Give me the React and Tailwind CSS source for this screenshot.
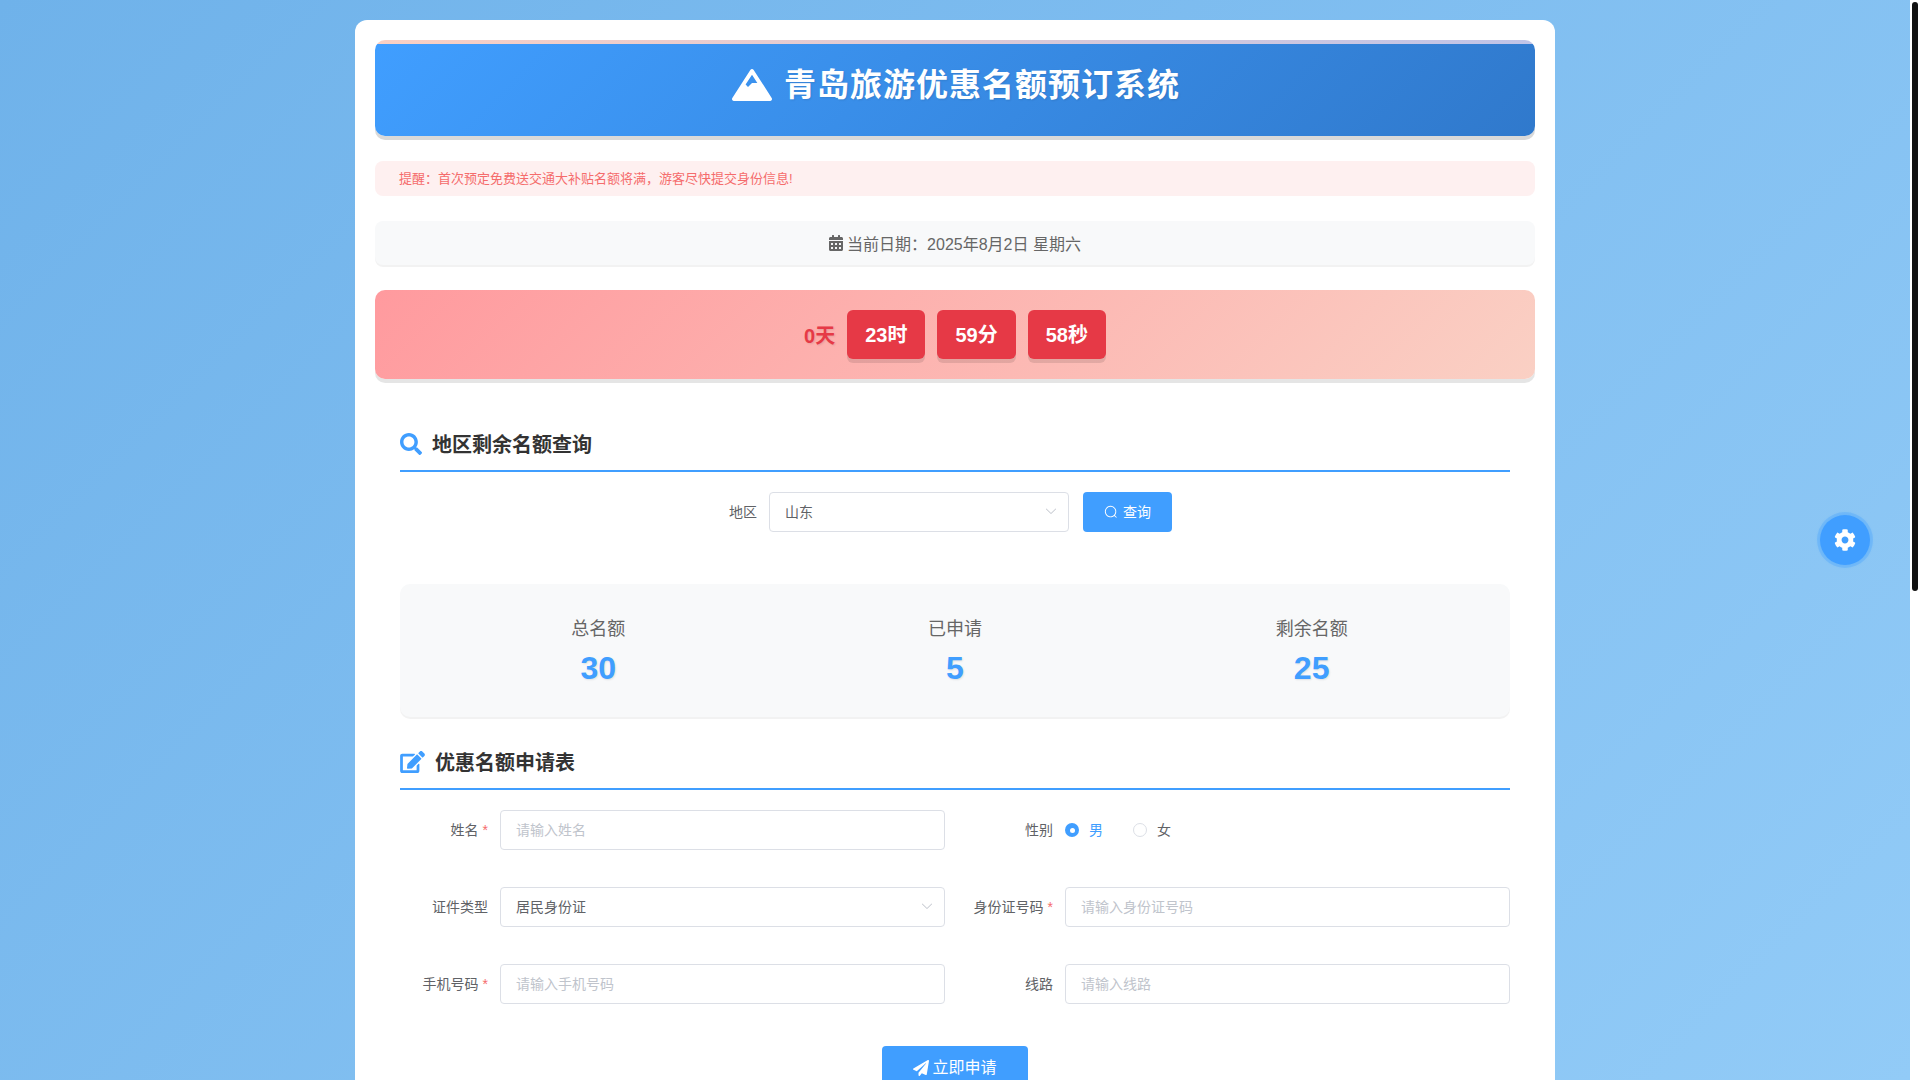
import React from "react";
import { FaMountain, FaCalendarAlt, FaSearch, FaEdit, FaPaperPlane, FaCog } from "react-icons/fa";

const ElSearch = ({ className }) => (
  <svg viewBox="0 0 1024 1024" className={className} fill="currentColor">
    <path d="m795.904 750.72 124.992 124.928a32 32 0 0 1-45.248 45.248L750.656 795.904a416 416 0 1 1 45.248-45.248zM480 832a352 352 0 1 0 0-704 352 352 0 0 0 0 704z" />
  </svg>
);

const ElArrow = ({ className }) => (
  <svg viewBox="0 0 1024 1024" className={className} fill="currentColor">
    <path d="M831.872 340.864 512 652.672 192.128 340.864a30.592 30.592 0 0 0-42.752 0 29.12 29.12 0 0 0 0 41.6L489.664 714.24a32 32 0 0 0 44.672 0l340.288-331.712a29.12 29.12 0 0 0 0-41.728 30.592 30.592 0 0 0-42.752 0z" />
  </svg>
);

const Heading = ({ icon, children, className }) => (
  <h2 className={`flex items-center gap-[10px] border-b-2 border-[#409eff] pb-[12px] text-[20px] font-bold leading-[30px] text-[#333333] ${className}`}>
    {icon}
    <span className="h-[30px] leading-[34px]">{children}</span>
  </h2>
);

const SelectBox = ({ value, className }) => (
  <div className={`flex h-[40px] items-center justify-between rounded-[4px] border border-[#dcdfe6] bg-white pl-[15px] pr-[10px] text-[14px] text-[#606266] ${className}`}>
    <span>{value}</span>
    <ElArrow className="mb-[3px] h-[14px] w-[14px] text-[#c0c4cc]" />
  </div>
);

const Field = ({ label, required, children }) => (
  <div className="flex h-[40px] items-center">
    <label className="flex w-[100px] shrink-0 items-center justify-end pr-[12px] text-[14px] text-[#606266]">
      {label}
      {required && <span className="ml-[4px] text-[#f56c6c]">*</span>}
    </label>
    {children}
  </div>
);

const TextInput = ({ placeholder }) => (
  <input
    placeholder={placeholder}
    className="h-[40px] min-w-0 flex-1 rounded-[4px] border border-[#dcdfe6] bg-white px-[15px] text-[14px] text-[#606266] outline-none placeholder:text-[#c0c4cc]"
  />
);

const TimeBox = ({ children }) => (
  <div className="rounded-[6px] bg-[#e63946] px-[18px] pb-[7px] pt-[9px] text-[20px] font-bold leading-[33px] text-white shadow-[0_4px_0_rgba(0,0,0,0.1)]">
    {children}
  </div>
);

const Stat = ({ label, value }) => (
  <div className="flex flex-col items-center">
    <div className="h-[27px] text-[18px] leading-[30px] text-[#666666]">{label}</div>
    <div className="mt-[3px] text-[32px] font-bold leading-[48px] text-[#409eff] [text-shadow:1px_1px_2px_rgba(0,0,0,0.1)]">{value}</div>
  </div>
);

export default function App() {
  return (
    <div className="flex h-screen overflow-hidden font-['Liberation_Sans','Noto_Sans_CJK_SC',sans-serif]">
      <div className="min-w-0 flex-1 overflow-hidden bg-[linear-gradient(135deg,#6fb2ea,#92cbf7)] py-[20px]">
        <main className="mx-auto min-h-[1927px] w-[1200px] rounded-[12px] bg-white p-[20px]">
          <header className="overflow-hidden rounded-[10px] shadow-[0_4px_0_rgba(0,0,0,0.15)]">
            <div className="h-[4px] bg-[linear-gradient(90deg,#fad0c4,#c0c4e8)]" />
            <div className="flex h-[92px] items-start justify-center gap-[12px] bg-[linear-gradient(135deg,#409eff,#3079cc)] pl-[2px] pt-[17px] text-white">
              <FaMountain className="mt-[8px] h-[32px] w-[40px]" />
              <h1 className="text-[32px] font-bold leading-[48px] tracking-[1px] [text-shadow:1px_1px_2px_rgba(0,0,0,0.1)]">青岛旅游优惠名额预订系统</h1>
            </div>
          </header>

          <div className="mt-[25px] flex h-[35px] items-center rounded-[8px] bg-[#fef0f0] px-[24px] text-[13px] text-[#f56c6c]">
            提醒：首次预定免费送交通大补贴名额将满，游客尽快提交身份信息!
          </div>

          <div className="mt-[25px] flex h-[44px] items-center justify-center gap-[4px] rounded-[8px] bg-[#f8f9fa] text-[16px] leading-[24px] text-[#666666] shadow-[0_2px_0_rgba(0,0,0,0.05)]">
            <FaCalendarAlt className="h-[16px] w-[14px]" />
            <span className="pt-[3px]">当前日期：2025年8月2日 星期六</span>
          </div>

          <div className="mt-[25px] flex h-[89px] items-center justify-center gap-[12px] rounded-[10px] bg-[linear-gradient(135deg,#ff9a9e,#fad0c4)] shadow-[0_4px_0_rgba(0,0,0,0.1)]">
            <span className="pt-[2px] text-[20px] font-bold text-[#e63946] [text-shadow:1px_1px_2px_rgba(0,0,0,0.1)]">0天</span>
            <TimeBox>23时</TimeBox>
            <TimeBox>59分</TimeBox>
            <TimeBox>58秒</TimeBox>
          </div>

          <section className="mt-[49px] px-[25px]">
            <Heading icon={<FaSearch className="mt-[2px] h-[22px] w-[22px] text-[#409eff]" />}>地区剩余名额查询</Heading>

            <div className="mt-[20px] flex items-center justify-center pr-[9px]">
              <span className="mr-[12px] text-[14px] text-[#606266]">地区</span>
              <SelectBox value="山东" className="w-[300px]" />
              <button className="ml-[14px] flex h-[40px] w-[89px] items-center justify-center gap-[5px] rounded-[4px] bg-[#409eff] text-[14px] text-white">
                <ElSearch className="h-[14px] w-[14px]" />
                查询
              </button>
            </div>

            <div className="mt-[52px] grid h-[133px] grid-cols-3 rounded-[10px] bg-[#f8f9fa] px-[20px] pt-[30px] shadow-[0_2px_0_rgba(0,0,0,0.05)]">
              <Stat label="总名额" value="30" />
              <Stat label="已申请" value="5" />
              <Stat label="剩余名额" value="25" />
            </div>

            <Heading className="mt-[29px]" icon={<FaEdit className="mt-[2px] h-[22px] w-[25px] text-[#409eff]" />}>优惠名额申请表</Heading>

            <form className="mt-[20px] grid grid-cols-2 gap-x-[20px] gap-y-[37px]">
              <Field label="姓名" required>
                <TextInput placeholder="请输入姓名" />
              </Field>
              <Field label="性别">
                <div className="flex items-center text-[14px]">
                  <span className="flex h-[14px] w-[14px] items-center justify-center rounded-full bg-[#409eff]">
                    <span className="h-[5px] w-[5px] rounded-full bg-white" />
                  </span>
                  <span className="ml-[10px] text-[#409eff]">男</span>
                  <span className="ml-[30px] h-[14px] w-[14px] rounded-full border border-[#dcdfe6] bg-white" />
                  <span className="ml-[10px] text-[#606266]">女</span>
                </div>
              </Field>
              <Field label="证件类型">
                <SelectBox value="居民身份证" className="min-w-0 flex-1" />
              </Field>
              <Field label="身份证号码" required>
                <TextInput placeholder="请输入身份证号码" />
              </Field>
              <Field label="手机号码" required>
                <TextInput placeholder="请输入手机号码" />
              </Field>
              <Field label="线路">
                <TextInput placeholder="请输入线路" />
              </Field>
            </form>

            <div className="mt-[42px] flex justify-center">
              <button className="flex h-[42px] w-[146px] items-center justify-center gap-[3px] rounded-[4px] bg-[#409eff] pt-[2px] text-[16px] text-white">
                <FaPaperPlane className="h-[16px] w-[16px]" />
                立即申请
              </button>
            </div>
          </section>
        </main>
      </div>

      <aside className="w-[10px] shrink-0 bg-white px-[2px] pt-[2px]">
        <div className="h-[589px] rounded-[3px] bg-[#111111]" />
      </aside>

      <button className="fixed right-[50px] top-1/2 flex h-[50px] w-[50px] -translate-y-1/2 items-center justify-center rounded-full bg-[#409eff] text-white shadow-[0_0_0_3px_rgba(64,158,255,0.3),0_0_4px_rgba(64,158,255,0.3)]">
        <FaCog className="h-[22px] w-[22px]" />
      </button>
    </div>
  );
}
